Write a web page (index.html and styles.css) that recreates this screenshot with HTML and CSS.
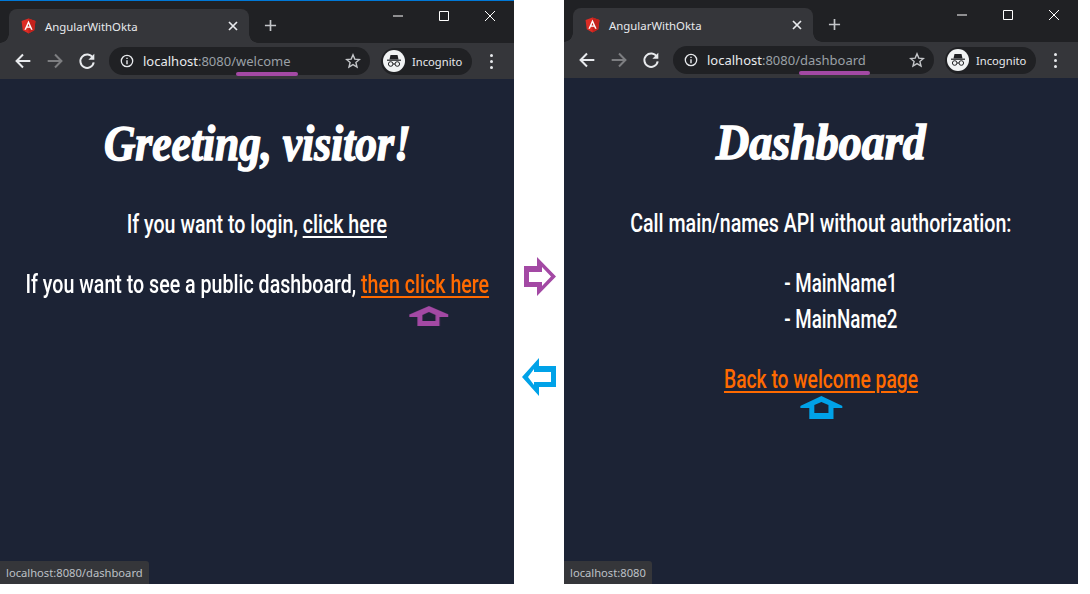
FILE: index.html
```html
<!DOCTYPE html>
<html lang="en">

<head>
    <meta charset="UTF-8">
    <meta name="viewport" content="width=device-width, initial-scale=1.0">
    <title>AngularWithOkta</title>
    <link rel="stylesheet" href="styles.css">
</head>

<body>
    <div class="stage">
        <!-- welcome window -->
        <section class="win win_left">
            <div class="strip">
                <div class="tab">
                    <svg class="favicon" viewBox="0 0 16 16"><path fill="#dd2c25" d="M8 0 15.4 2.6 14.2 12.4 8 16 1.8 12.4.6 2.6z"/><path fill="#c3221c" d="M8 0 15.4 2.6 14.2 12.4 8 16z"/><path fill="#fff" d="M8 2 3.6 12h1.7l.9-2.2h3.6l.9 2.2h1.7zM6.9 8.4 8 5.7l1.1 2.7z"/></svg>
                    <span class="tab_title">AngularWithOkta</span>
                    <svg class="tab_close" viewBox="0 0 10 10"><path d="M1 1 9 9M9 1 1 9" stroke="#e8eaed" stroke-width="1.7"/></svg>
                </div>
                <svg class="new_tab" viewBox="0 0 14 14"><path d="M7 1V13M1 7H13" stroke="#c4c6c9" stroke-width="1.8"/></svg>
                <div class="controls">
                    <span class="ctl"><svg viewBox="0 0 12 12"><path d="M1 6H11" stroke="#fff"/></svg></span>
                    <span class="ctl"><svg viewBox="0 0 12 12"><path d="M1.5 1.5H10.500V10.500H1.500Z" fill="none" stroke="#fff"/></svg></span>
                    <span class="ctl"><svg viewBox="0 0 12 12"><path d="M1 1 11 11M11 1 1 11" stroke="#fff"/></svg></span>
                </div>
            </div>
            <div class="toolbar">
                <svg class="tool" viewBox="0 0 24 24"><path d="M20 12H5M12 5 5 12 12 19" fill="none" stroke="#e8eaed" stroke-width="2.200"/></svg>
                <svg class="tool" viewBox="0 0 24 24"><path d="M4 12H19M12 5 19 12 12 19" fill="none" stroke="#7d7e81" stroke-width="2.200"/></svg>
                <svg class="tool" viewBox="0 0 24 24"><path d="M18.400 8.500A7.300 7.300 0 1 0 19.300 13.500" fill="none" stroke="#e8eaed" stroke-width="2.200"/><path d="M20 4V10.500H13.500Z" fill="#e8eaed"/></svg>
                <div class="omnibox">
                    <svg class="info" viewBox="0 0 16 16"><circle cx="8" cy="8" r="6.500" fill="none" stroke="#e8eaed" stroke-width="1.500"/><path d="M7.200 7H8.800V11.800H7.200ZM7.200 4.200H8.800V5.800H7.200Z" fill="#e8eaed"/></svg>
                    <span class="host">localhost</span><span class="port">:8080/welcome</span>
                    <span class="url_mark url_mark_left"></span>
                    <svg class="star" viewBox="0 0 16 16"><path d="M8 1.800 9.800 6.100 14.400 6.500 10.900 9.500 12 14 8 11.600 4 14 5.100 9.500 1.600 6.500 6.200 6.100Z" fill="none" stroke="#c4c6c9" stroke-width="1.400"/></svg>
                </div>
                <div class="pill">
                    <span class="avatar"><svg viewBox="0 0 22 22"><path d="M7.500 5H14.500L15.500 9.500H6.500Z" fill="#202124"/><path d="M4 10.200H18" stroke="#202124" stroke-width="1.200"/><circle cx="7.700" cy="14" r="2.300" fill="none" stroke="#202124"/><circle cx="14.300" cy="14" r="2.300" fill="none" stroke="#202124"/><path d="M10 14H12" stroke="#202124"/></svg></span>
                    <span class="pill_text">Incognito</span>
                </div>
                <div class="menu"><i></i><i></i><i></i></div>
            </div>
            <main class="page">
                <h1>Greeting, visitor!</h1>
                <p class="line line_first">If you want to login, <a href="#" class="link">click here</a></p>
                <p class="line line_next">If you want to see a public dashboard, <a href="#" class="link link_go">then click here<svg class="up up_purple" viewBox="0 0 39 20" preserveAspectRatio="none"><path fill="#a349a4" fill-rule="evenodd" d="M19.500 0 39 8.500V11H30V20H8V11H0V8.500ZM19.500 6 13 9V15H26V9Z"/></svg></a></p>
            </main>
            <div class="status">localhost:8080/dashboard</div>
        </section>

        <!-- arrows between the windows -->
        <div class="between">
            <svg class="side side_right" viewBox="0 0 32 39"><path fill="#a349a4" fill-rule="evenodd" d="M0 9H13V0L32 19.500 13 39V30H0ZM5 15V25H18V29L27 19.500 18 10V15Z"/></svg>
            <svg class="side side_left" viewBox="0 0 34 38"><path fill="#00a2e8" fill-rule="evenodd" d="M34 8H17V0L0 19 17 38V29H34ZM29 14V24H12V27L6 19 12 11V14Z"/></svg>
        </div>

        <!-- dashboard window -->
        <section class="win">
            <div class="strip">
                <div class="tab">
                    <svg class="favicon" viewBox="0 0 16 16"><path fill="#dd2c25" d="M8 0 15.4 2.6 14.2 12.4 8 16 1.8 12.4.6 2.6z"/><path fill="#c3221c" d="M8 0 15.4 2.6 14.2 12.4 8 16z"/><path fill="#fff" d="M8 2 3.6 12h1.7l.9-2.2h3.6l.9 2.2h1.7zM6.9 8.4 8 5.7l1.1 2.7z"/></svg>
                    <span class="tab_title">AngularWithOkta</span>
                    <svg class="tab_close" viewBox="0 0 10 10"><path d="M1 1 9 9M9 1 1 9" stroke="#e8eaed" stroke-width="1.7"/></svg>
                </div>
                <svg class="new_tab" viewBox="0 0 14 14"><path d="M7 1V13M1 7H13" stroke="#c4c6c9" stroke-width="1.8"/></svg>
                <div class="controls">
                    <span class="ctl"><svg viewBox="0 0 12 12"><path d="M1 6H11" stroke="#fff"/></svg></span>
                    <span class="ctl"><svg viewBox="0 0 12 12"><path d="M1.5 1.5H10.500V10.500H1.500Z" fill="none" stroke="#fff"/></svg></span>
                    <span class="ctl"><svg viewBox="0 0 12 12"><path d="M1 1 11 11M11 1 1 11" stroke="#fff"/></svg></span>
                </div>
            </div>
            <div class="toolbar">
                <svg class="tool" viewBox="0 0 24 24"><path d="M20 12H5M12 5 5 12 12 19" fill="none" stroke="#e8eaed" stroke-width="2.200"/></svg>
                <svg class="tool" viewBox="0 0 24 24"><path d="M4 12H19M12 5 19 12 12 19" fill="none" stroke="#7d7e81" stroke-width="2.200"/></svg>
                <svg class="tool" viewBox="0 0 24 24"><path d="M18.400 8.500A7.300 7.300 0 1 0 19.300 13.500" fill="none" stroke="#e8eaed" stroke-width="2.200"/><path d="M20 4V10.500H13.500Z" fill="#e8eaed"/></svg>
                <div class="omnibox">
                    <svg class="info" viewBox="0 0 16 16"><circle cx="8" cy="8" r="6.500" fill="none" stroke="#e8eaed" stroke-width="1.500"/><path d="M7.200 7H8.800V11.800H7.200ZM7.200 4.200H8.800V5.800H7.200Z" fill="#e8eaed"/></svg>
                    <span class="host">localhost</span><span class="port">:8080/dashboard</span>
                    <span class="url_mark url_mark_right"></span>
                    <svg class="star" viewBox="0 0 16 16"><path d="M8 1.800 9.800 6.100 14.400 6.500 10.900 9.500 12 14 8 11.600 4 14 5.100 9.500 1.600 6.500 6.200 6.100Z" fill="none" stroke="#c4c6c9" stroke-width="1.400"/></svg>
                </div>
                <div class="pill">
                    <span class="avatar"><svg viewBox="0 0 22 22"><path d="M7.500 5H14.500L15.500 9.500H6.500Z" fill="#202124"/><path d="M4 10.200H18" stroke="#202124" stroke-width="1.200"/><circle cx="7.700" cy="14" r="2.300" fill="none" stroke="#202124"/><circle cx="14.300" cy="14" r="2.300" fill="none" stroke="#202124"/><path d="M10 14H12" stroke="#202124"/></svg></span>
                    <span class="pill_text">Incognito</span>
                </div>
                <div class="menu"><i></i><i></i><i></i></div>
            </div>
            <main class="page">
                <h1 class="title_dash">Dashboard</h1>
                <p class="line line_first">Call main/names API without authorization:</p>
                <ul class="line names">
                    <li>- MainName1</li>
                    <li>- MainName2</li>
                </ul>
                <p class="line line_next line_back"><a href="#" class="link link_go">Back to welcome page<svg class="up up_blue" viewBox="0 0 42 23" preserveAspectRatio="none"><path fill="#00a2e8" fill-rule="evenodd" d="M21 0 42 10V12H33V23H9V12H0V10ZM21 6 14 9V17H28V9Z"/></svg></a></p>
            </main>
            <div class="status">localhost:8080</div>
        </section>
    </div>
</body>

</html>
```

FILE: styles.css
```css
* {
    margin: 0;
    padding: 0;
    box-sizing: border-box;
}

body {
    background: #fff;
    font-family: "Noto Sans", "Open Sans", sans-serif;
}

.stage {
    display: flex;
    width: 1090px;
    height: 594px;
}

.win {
    position: relative;
    display: flex;
    flex-direction: column;
    width: 514px;
    height: 584px;
    background: #1c2335;
}

.win_left {
    border-top: 1px solid #0078d7;
}

/* tab strip */
.strip {
    display: flex;
    align-items: flex-end;
    height: 42px;
    padding-left: 9px;
    background: #202124;
}

.tab {
    position: relative;
    display: flex;
    align-items: center;
    width: 240px;
    height: 34px;
    padding: 0 11px 0 12px;
    background: #35363a;
    border-radius: 8px 8px 0 0;
}

.tab::before,
.tab::after {
    content: "";
    position: absolute;
    bottom: 0;
    width: 9px;
    height: 9px;
}

.tab::before {
    left: -9px;
    background: radial-gradient(circle at 0 0, #202124 8.500px, #35363a 9px);
}

.tab::after {
    right: -9px;
    background: radial-gradient(circle at 100% 0, #202124 8.500px, #35363a 9px);
}

.favicon {
    width: 15px;
    height: 16px;
}

.tab_title {
    margin-left: 9px;
    font-size: 11.400px;
    color: #e8eaed;
}

.tab_close {
    width: 10px;
    height: 10px;
    margin-left: auto;
}

.new_tab {
    width: 13px;
    height: 13px;
    margin: 0 0 11px 15px;
}

.controls {
    display: flex;
    align-self: flex-start;
    margin-left: auto;
    margin-right: 1px;
}

.ctl {
    display: flex;
    align-items: center;
    justify-content: center;
    width: 46px;
    height: 30px;
}

.ctl svg {
    width: 12px;
    height: 12px;
}

/* toolbar */
.toolbar {
    display: flex;
    align-items: center;
    height: 36px;
    padding-left: 7px;
    background: #35363a;
}

.tool {
    flex: none;
    width: 32px;
    height: 22px;
}

.omnibox {
    position: relative;
    display: flex;
    align-items: center;
    width: 261px;
    height: 28px;
    margin-left: 6px;
    padding-left: 11px;
    background: #202124;
    border-radius: 14px;
    font-size: 13px;
}

.info {
    width: 14px;
    height: 14px;
    margin-right: 9px;
}

.host {
    color: #e8eaed;
}

.port {
    color: #9aa0a6;
}

.star {
    width: 16px;
    height: 16px;
    position: absolute;
    right: 9px;
}

/* drawn over the screenshot */
.url_mark {
    position: absolute;
    height: 4px;
    top: 25px;
    background: #a349a4;
    border-radius: 2px;
}

.url_mark_left {
    left: 127px;
    width: 62px;
}

.url_mark_right {
    left: 126px;
    width: 71px;
}

.pill {
    display: flex;
    align-items: center;
    width: 91px;
    height: 27px;
    margin-left: 11px;
    padding-left: 2px;
    background: #202124;
    border-radius: 14px;
}

.avatar {
    display: flex;
    width: 22px;
    height: 22px;
    background: #f1f3f4;
    border-radius: 50%;
}

.pill_text {
    margin-left: 7px;
    font-size: 11.200px;
    color: #e8eaed;
}

.menu {
    display: flex;
    flex-direction: column;
    align-items: center;
    gap: 3px;
    width: 38px;
}

.menu i {
    width: 3px;
    height: 3px;
    background: #e8eaed;
    border-radius: 50%;
}

/* page */
.page {
    flex: 1;
    display: flex;
    flex-direction: column;
    align-items: center;
    padding-top: 36px;
    color: #fff;
    font-family: "Roboto", sans-serif;
    font-size: 25px;
    font-weight: 500;
    line-height: 36px;
}

h1 {
    flex: none;
    height: 56px;
    font-family: "Liberation Serif", serif;
    font-style: italic;
    font-weight: bold;
    font-size: 50px;
    line-height: 56px;
    white-space: nowrap;
    -webkit-text-stroke: 1.500px #fff;
    transform: scaleX(0.87);
}

.title_dash {
    transform: scaleX(0.92);
}

/* no condensed face is installed, so the text is narrowed */
.line {
    flex: none;
    white-space: nowrap;
    transform: scaleX(0.785);
}

.line_first {
    margin-top: 36px;
}

.line_next {
    margin-top: 24px;
}

.line_back {
    transform: scaleX(0.77);
}

.names {
    margin-top: 24px;
    padding-left: 53px;
    list-style: none;
    transform: scaleX(0.75);
}

.link {
    position: relative;
    color: #fff;
    text-decoration: underline;
    text-decoration-thickness: 2px;
    text-underline-offset: 3px;
}

.link_go {
    color: #ff6a00;
}

.up {
    position: absolute;
    top: 100%;
    left: 50%;
}

/* widths undo the scale of .line */
.up_purple {
    width: 50px;
    height: 20px;
    margin: 7px 0 0 -20px;
}

.up_blue {
    width: 55px;
    height: 23px;
    margin: 2px 0 0 -27px;
}

.status {
    position: absolute;
    left: 0;
    bottom: 0;
    height: 23px;
    padding: 0 6px;
    background: #35363a;
    border-radius: 0 3px 0 0;
    color: #bdc1c6;
    font-size: 11.200px;
    line-height: 24px;
}

/* gap between windows */
.between {
    display: flex;
    flex-direction: column;
    width: 50px;
    padding-top: 257px;
    gap: 62px;
}

.side_right {
    width: 32px;
    height: 39px;
    margin-left: 10px;
}

.side_left {
    width: 34px;
    height: 38px;
    margin-left: 8px;
}
```
